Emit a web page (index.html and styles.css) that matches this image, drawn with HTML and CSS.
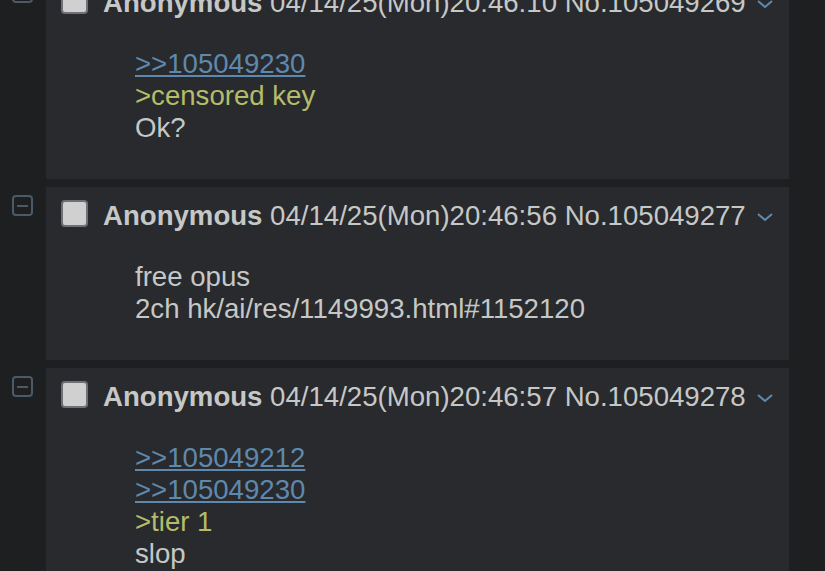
FILE: index.html
```html
<!DOCTYPE html>
<html>
<head>
<meta charset="utf-8">
<link rel="stylesheet" href="styles.css">
</head>
<body>
<div class="thread">
  <div class="reply">
    <div class="side"><span class="toggle"><span class="bar"></span></span></div>
    <div class="post">
      <div class="head">
        <span class="check"></span>
        <span class="info"><b class="name">Anonymous</b> 04/14/25(Mon)20:46:10 No.105049269</span>
        <svg class="chev" width="16" height="8" viewBox="0 0 16 8"><path d="M1 1 L8 7 L15 1" fill="none" stroke="#5f89ac" stroke-width="2"/></svg>
      </div>
      <div class="body">
        <a class="ql" href="#">&gt;&gt;105049230</a><br>
        <span class="gt">&gt;censored key</span><br>
        Ok?
      </div>
    </div>
  </div>
  <div class="reply">
    <div class="side"><span class="toggle"><span class="bar"></span></span></div>
    <div class="post">
      <div class="head">
        <span class="check"></span>
        <span class="info"><b class="name">Anonymous</b> 04/14/25(Mon)20:46:56 No.105049277</span>
        <svg class="chev" width="16" height="8" viewBox="0 0 16 8"><path d="M1 1 L8 7 L15 1" fill="none" stroke="#5f89ac" stroke-width="2"/></svg>
      </div>
      <div class="body">
        free opus<br>
        2ch hk/ai/res/1149993.html#1152120
      </div>
    </div>
  </div>
  <div class="reply">
    <div class="side"><span class="toggle"><span class="bar"></span></span></div>
    <div class="post">
      <div class="head">
        <span class="check"></span>
        <span class="info"><b class="name">Anonymous</b> 04/14/25(Mon)20:46:57 No.105049278</span>
        <svg class="chev" width="16" height="8" viewBox="0 0 16 8"><path d="M1 1 L8 7 L15 1" fill="none" stroke="#5f89ac" stroke-width="2"/></svg>
      </div>
      <div class="body">
        <a class="ql" href="#">&gt;&gt;105049212</a><br>
        <a class="ql" href="#">&gt;&gt;105049230</a><br>
        <span class="gt">&gt;tier 1</span><br>
        slop
      </div>
    </div>
  </div>
</div>
</body>
</html>
```
FILE: styles.css
```css
html, body {
  margin: 0;
  padding: 0;
  background: #1d1f21;
  overflow: hidden;
}
body {
  font-family: "Liberation Sans", Arial, sans-serif;
  font-size: 27.6px;
  line-height: 32px;
  color: #c5c8c6;
}
.thread {
  margin-top: -26px;
  display: flex;
  flex-direction: column;
  gap: 8px;
}
.reply {
  display: flex;
}
.side {
  width: 46px;
  flex: none;
  padding-top: 8px;
}
.toggle {
  display: flex;
  align-items: center;
  justify-content: center;
  margin-left: 12px;
  width: 21px;
  height: 21px;
  box-sizing: border-box;
  border: 2px solid #4a5a68;
  border-radius: 4px;
}
.bar {
  width: 11px;
  height: 2px;
  background: #4a5a68;
}
.post {
  width: 743px;
  background: #282a2e;
  padding: 13px 0 35px;
}
.head {
  display: flex;
  align-items: flex-start;
  height: 32px;
  white-space: nowrap;
}
.check {
  flex: none;
  width: 27px;
  height: 27px;
  box-sizing: border-box;
  margin-left: 15px;
  margin-right: 15px;
  background: #d0d0d0;
  border: 2px solid #6f6f78;
  border-radius: 4px;
}
.name {
  font-weight: bold;
  color: #c5c8c6;
}
.chev {
  margin-left: 11px;
  margin-top: 13px;
}
.body {
  margin: 29px 0 0 89px;
}
.ql {
  color: #5f89ac;
  text-decoration: underline;
}
.gt {
  color: #b5bd68;
}
```
